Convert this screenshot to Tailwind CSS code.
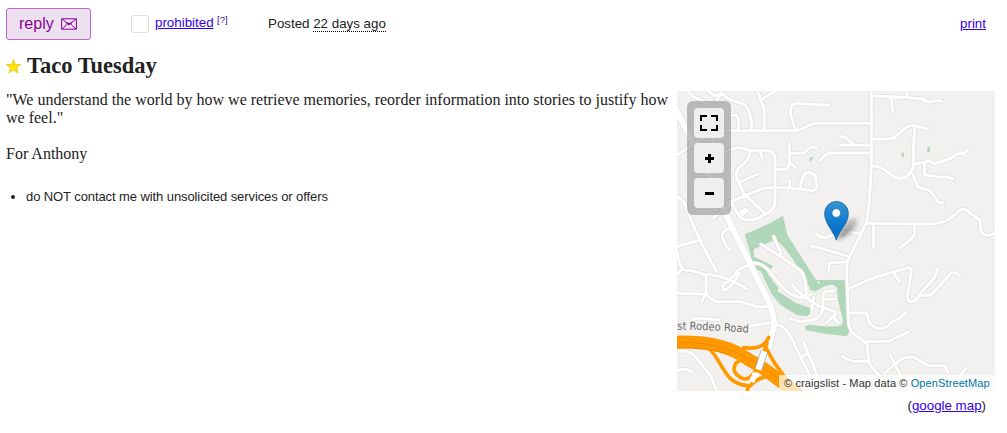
<!DOCTYPE html>
<html lang="en">
<head>
<meta charset="utf-8">
<title>Taco Tuesday</title>
<script src="https://cdn.jsdelivr.net/npm/@tailwindcss/browser@4"></script>
</head>
<body class="h-[433px] w-[1007px] overflow-hidden bg-white font-['Liberation_Sans',Arial,sans-serif] text-[13.33px] text-[#222]">
<header class="flex h-12 items-start pt-2 pr-[21px] pl-1.5">
  <button class="flex h-8 w-[85px] items-center rounded-[3px] border border-[#bb66cc] bg-[#ede0ef] pl-3 text-base text-[#880099]"><span class="leading-8">reply</span>
    <svg class="ml-[7px] h-3 w-4" viewBox="0 0 16 12" fill="none" stroke="#880099"><path d="M.6.8h14.8v10.4H.6z"/><path d="M1 1l5.500 4.400q1.500 1.200 3 0L15 1M1 11l5.400-5M15 11L9.600 6" stroke-width="1"/><path d="M5 4.500L8 7l3-2.500L8 5.500z" fill="#880099"/></svg>
  </button>
  <span class="mt-[7px] ml-10 h-[18px] w-[18px] rounded-[3px] border border-[#ddd] bg-white"></span>
  <a class="mt-[7px] ml-1.5 w-[58px] leading-4 whitespace-nowrap text-[#3300ee] underline">prohibited</a>
  <a class="mt-[6px] ml-[4px] w-[11px] text-[9.5px] leading-[11px] whitespace-nowrap text-[#3a1090]">[?]</a>
  <p class="mt-2 ml-10 flex leading-4 whitespace-nowrap">Posted&nbsp;<time class="h-4 border-b border-dotted border-black">22 days ago</time></p>
  <a class="mt-2 ml-auto leading-4 text-[#3300ee] underline">print</a>
</header>
<h1 class="flex h-[43px] items-start pl-1.5 font-['Liberation_Serif',serif] text-[22.5px] leading-9 font-bold">
  <svg class="mt-[11px] mr-[6px] h-[15px] w-[15px]" viewBox="0 0 15 15"><path d="M7.500 .5l1.900 5h5.300l-4.200 3.300 1.600 5.200-4.600-3.100-4.600 3.100 1.600-5.200L.3 5.500h5.300z" fill="#ffe600" stroke="#e8bd00" stroke-width=".7"/></svg>
  <span>Taco Tuesday</span>
</h1>
<main class="flex pl-1.5">
  <section class="w-[671px] font-['Liberation_Serif',serif] text-base leading-[18px]">
    <p class="w-[669px]">"We understand the world by how we retrieve memories, reorder information into stories to justify how<br>we feel."<br><br>For Anthony</p>
    <ul class="mt-[25px] list-disc pl-5 font-['Liberation_Sans',Arial,sans-serif] text-[13px] tracking-[-0.09px]"><li>do NOT contact me with unsolicited services or offers</li></ul>
  </section>
  <aside class="w-[318px]">
    <div class="relative h-[300px] overflow-hidden bg-[#f2f1f0]">
      <svg class="block h-[300px] w-[318px]" viewBox="0 3 954 900" fill="none" stroke-linecap="round" stroke-linejoin="round">
        <defs>
          <g id="roads">
            <path d="M90 0l22 18 22-8 20 16 48 18q22 18 22 75M240 0q12 26 22 60v58M250 30l50-30M134 10l-16 22M34 0q4 20 35 28 24 10 20 50l22 90M160 76q24-4 24 14v28M0 195l60-40 40-20q30-15 70-13h184c30-2 38-22 70-22h159"/>
            <path d="M355 116q-18-45-14-60 8-22 30-15l86 5M583 0v230l-6 100q-1 30-10 70l-54 110q-4 15-4 40l6 150q2 20 20 35l35 26 5 50q2 14 18 30l37 38 30 60"/>
            <path d="M583 18l100 4 54 5 24 10q30-10 33-2M741 33l20 4M641 22l7 44M690 0v20M586 147h50q15 0 27-14l24-20q14-10 28-5l36 8M713 110l-4 75q5 45-8 60-12 25-43 18c-30-15-40-35-72-34M713 223l44-10 17 8 50-17 15-12 24-3 10-10M852 188l10 8M742 221l1 34 25 2 15 5 20-2 25 6M707 252q13 35 18 40l34 10 27 36h12"/>
            <path d="M583 166l-95-1M529 163l-22-20-18-4M583 189H460q-20 4-30 24M337 160v56q-2 24-14 22l-28 1M342 219l15 15M340 190h42q10-16 24-18h14"/>
            <path d="M95 165q20 30 55 18 35-20 70 0l40-2q34-4 34 29v125q0 25-28 37l-20 11q-36 16-58-3l-28-47M219 188q-8 30-31 43-16 18-7 35l20 46 65 60M250 183l7 28M188 276l55-24M150 340l70-30 44-17h64q50 5 80 9 16-4 10-20l-4-25q-10-14-28-8-10 10-16 42M338 270v22M211 360l-14 14M205 357l-14 10M160 345l-50 38"/>
            <path d="M570 400l140 2h60q40-2 68-32 10-14 26-12 12 6 18 13l28 20 1 27q4 16 20 19l30-9M590 402v72M713 403v30q-6 15-47 42M417 430q20 20 45 7l44-12 48 8M403 469l30 6 84 25M513 515l-56 4-2 23"/>
            <path d="M516 595l80-34 100-28q8 2 7 12l-12 75q0 14 12 16 12-2 24-20h35l60-66q10-8 27 8M650 548l17 26M730 610l42-46 10-28M519 670l46-2q10 4 8 20 12 30 42 27 14-1 28-18 30-12 42-30M567 755l71-2 22-12 35-15M494 799q28 18 48 15h34M621 850l28-24 30-22 30-4 44 27h50l10 20M640 796l46 90M868 834l-40 50"/>
            <path d="M0 320l20 15 30 75 34 70 34 65M0 470l70-20M0 480q5 45 20 60 30 0 65 15 45-5 125 42M15 537l-15 15M87 556v55l-13 24M0 610l86 3 30 22h76l45 15h40M48 688l18-4 60 6M220 525q-30 5-42 23-15 22-38 32-5 16 0 20 12 0 28-20l20-30M208 710l70-12M0 785q40-10 62 24l40 50 20 50M0 842q20-10 45 2M300 705q30 0 58 70l54 110 20 40M380 758l56 135M373 800l20-10M158 415q-26 8-22 28l12 25 12 12"/>
            <path d="M220 520q35-5 58 25l40 48q36 35 62 28l24-8M252 463l56 34 32 23 33 24q15 20 15 76M290 440l22 50-4 8M345 583q20 32 85 67l45 15-2 24M338 685l30 10q40-4 52-10 17-12 18-35M410 622q-4 20-5 36M470 604h-25q-9 5-7 45M438 628h38M448 698l20-18 16 18"/>
          </g>
          <filter id="shadow" x="-50%" y="-50%" width="200%" height="200%"><feGaussianBlur stdDeviation="7"/></filter>
          <linearGradient id="pin" x1="0" y1="0" x2="0" y2="1"><stop stop-color="#3594d3"/><stop offset=".7" stop-color="#0873cb"/></linearGradient>
          <linearGradient id="fade" gradientUnits="userSpaceOnUse" x1="485" y1="450" x2="545" y2="385"><stop stop-color="#222" stop-opacity=".7"/><stop offset="1" stop-color="#444" stop-opacity=".15"/></linearGradient>
        </defs>
        <g fill="#b0d7b9">
          <path d="M203 433q55-20 115-56l13 58 86 135h86l14 155-8 14q-60-5-122-18l-4-10 12-7q50 8 96 4l8-12-16-65-3-36q-10-26-66 10l-14-6q-15-40-75-123l-28-28-67 30 1 22 58 28-20 22-36-13z"/>
          <path d="M249 538l12-1 44 58-4 8 56 36 42 14v18l-8 7-30-2-50-30-30-38z"/>
          <path d="M401 200l8 2-6 12-7-3zM674 188h7v12h-8zM752 172h8l-2 14h-8z"/>
        </g>
        <path d="M361 656l12-5 9 2-8 5z" fill="#b5d0e8"/>
        <use href="#roads" stroke="#e1ddd6" stroke-width="13"/>
        <path d="M-10 45L70 200 150 380l76 155 49 100q14 30 17 70l-24 90-40 80" stroke="#e3dfd9" stroke-width="22"/>
        <use href="#roads" stroke="#fff" stroke-width="9"/>
        <path d="M-10 45L70 200 150 380l76 155 49 100q14 30 17 70l-24 90-40 80" stroke="#fff" stroke-width="18"/>
        <circle cx="425" cy="577" r="3" fill="#fff"/>
        <g stroke="#ff9900">
          <path d="M-20 757c130-5 190 18 240 55 50 24 90 64 160 115" stroke-width="39"/>
          <path d="M100 780c40 40 40 100 112 107v30M217 890q26-30 60-30l35 10M235 843q-24 36-46 18-28-17-12-42 20-16 54-10M200 773q60 8 75-31M262 765l28 50 78 110M270 760l-8 22" stroke-width="11"/>
        </g>
        <path d="M-10 757c110-3 220 18 350 140M-10 773q110-3 170 22" stroke="#e77e00" stroke-width="2"/>
        <path d="M262 784l-18 55" stroke="#aaa" stroke-width="23" stroke-linecap="butt"/>
        <path d="M262 784l-18 55" stroke="#fff" stroke-width="18" stroke-linecap="butt"/>
        <path d="M236 848l-12 28" stroke="#fff" stroke-width="16" stroke-linecap="butt"/>
        <path id="rodeo" d="M1 719Q90 718 250 731"/>
        <text font-family="DejaVu Sans, sans-serif" font-size="33" fill="#6c6c6c" stroke="#f2f1f0" stroke-width="5" paint-order="stroke"><textPath href="#rodeo" textLength="214" lengthAdjust="spacingAndGlyphs">st Rodeo Road</textPath></text>
        <path d="M479 450l32-55q18-20 32-8 5 18-24 42z" fill="url(#fade)" filter="url(#shadow)"/>
        <path d="M478 449c-8-25-35-48-35-79a35.500 35.500 0 0 1 71 0c0 31-28 54-36 79z" fill="url(#pin)" stroke="#2371ac" stroke-width="3"/>
        <circle cx="478" cy="369" r="13" fill="#fff" stroke="#2a78b2" stroke-width="2"/>
      </svg>
      <div class="absolute top-[10px] left-[10px] flex h-[114px] w-11 flex-col gap-[5px] rounded-[6px] bg-[#888]/55 p-[7px]">
        <span class="flex h-[30px] w-[30px] items-center justify-center rounded bg-[#f8f8f8]/85"><svg class="h-4 w-[18px]" viewBox="0 0 18 16" fill="none" stroke="#000" stroke-width="2"><path d="M1 6V1h6M11 1h6v5M1 10v5h6M11 15h6v-5"/></svg></span>
        <span class="flex h-[30px] w-[30px] items-center justify-center rounded bg-[#f8f8f8]/85"><svg class="h-[9px] w-[9px]" viewBox="0 0 9 9"><path d="M3 0h3v3h3v3H6v3H3V6H0V3h3z"/></svg></span>
        <span class="flex h-[30px] w-[30px] items-center justify-center rounded bg-[#f8f8f8]/85"><svg class="h-[3px] w-[9px]" viewBox="0 0 9 3"><path d="M0 0h9v3H0z"/></svg></span>
      </div>
      <div class="absolute right-0 bottom-0 h-4 w-[216px] bg-white/70 pl-[5px] text-[11px] leading-4 tracking-[0.11px] whitespace-nowrap text-[#333]">© craigslist - Map data © <span class="text-[#0078a8]">OpenStreetMap</span></div>
    </div>
    <p class="mt-[7px] pr-[9px] text-right leading-4">(<a class="text-[#3300ee] underline">google map</a>)</p>
  </aside>
</main>
</body>
</html>
